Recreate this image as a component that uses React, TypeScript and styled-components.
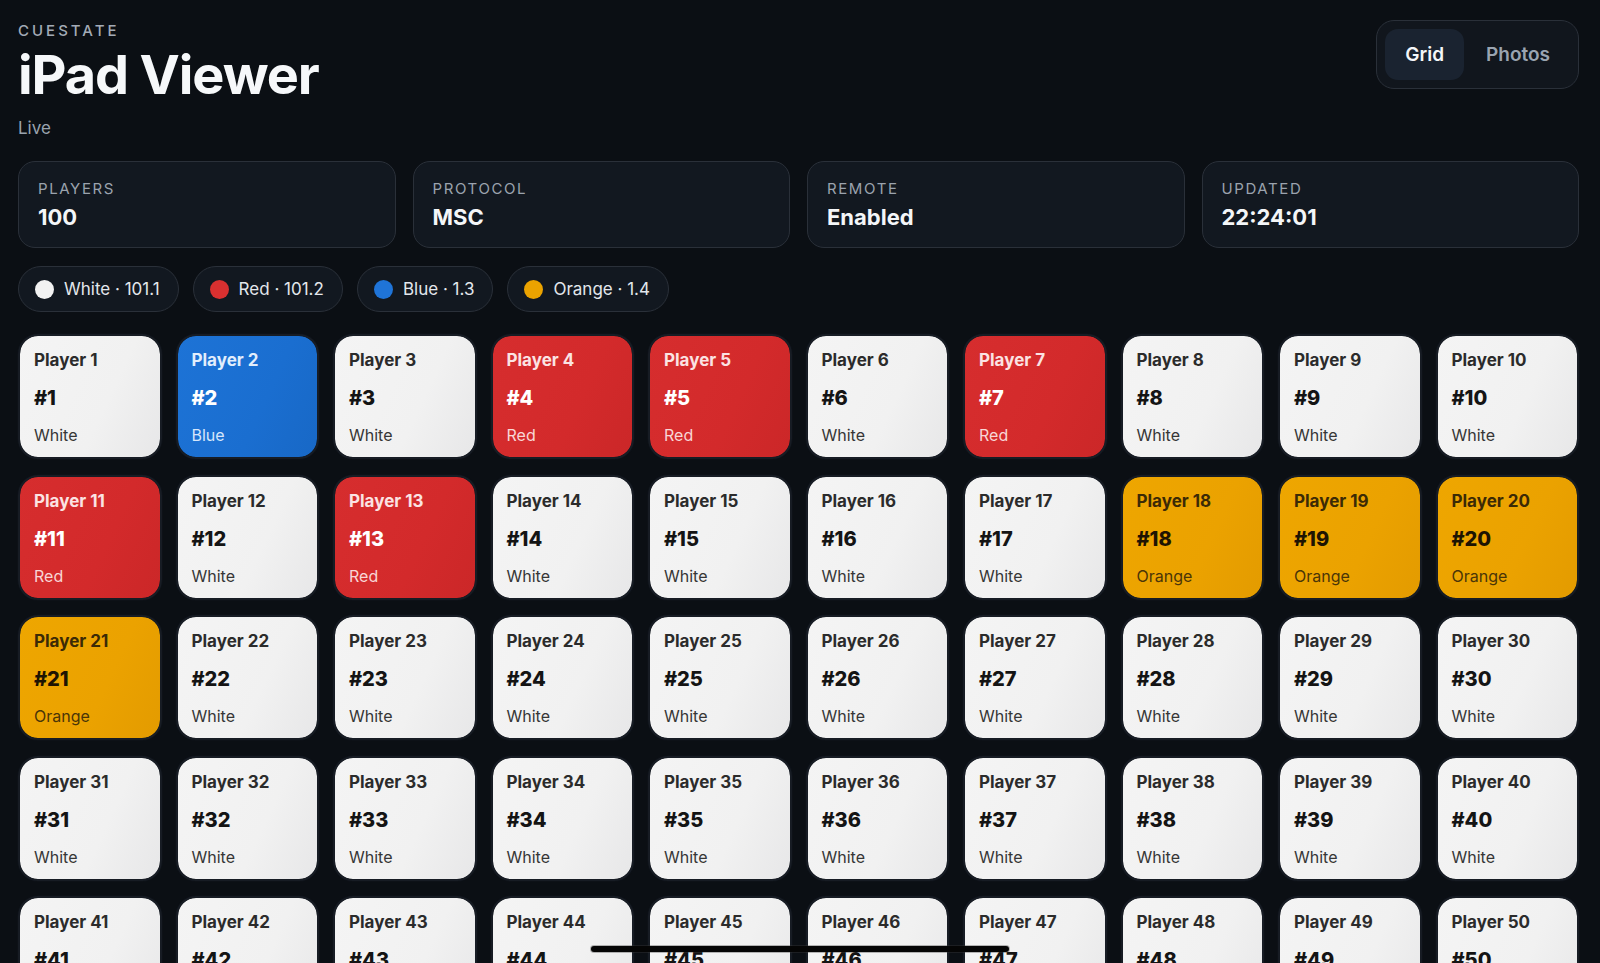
import React from "react";
import styled, { createGlobalStyle } from "styled-components";

type Cue = "White" | "Red" | "Blue" | "Orange";

const GlobalStyle = createGlobalStyle`
  html, body {
    margin: 0;
    padding: 0;
    background: #0b0f14;
  }
  body {
    font-family: Inter, "Noto Sans", "Liberation Sans", sans-serif;
    color: #f3f5f7;
    -webkit-font-smoothing: antialiased;
  }
  * { box-sizing: border-box; }
`;

const palette: Record<Cue, { bg: string; name: string; num: string; label: string; dot: string }> = {
  White: {
    bg: "linear-gradient(115deg, #f4f4f4 0%, #f1f1f1 60%, #e7e7e8 100%)",
    name: "#2b2b2b",
    num: "#141414",
    label: "#363636",
    dot: "#f2f2f2",
  },
  Red: {
    bg: "linear-gradient(115deg, #d62d2e 0%, #d32a2b 60%, #cb2728 100%)",
    name: "#fbe3e3",
    num: "#ffffff",
    label: "#f8d6d6",
    dot: "#d93030",
  },
  Blue: {
    bg: "linear-gradient(115deg, #1d73d6 0%, #1a6ed0 60%, #1868c6 100%)",
    name: "#e2eefc",
    num: "#ffffff",
    label: "#d5e6fb",
    dot: "#1f74d8",
  },
  Orange: {
    bg: "linear-gradient(115deg, #eea600 0%, #eba200 60%, #e39b00 100%)",
    name: "#3b2a06",
    num: "#1e1402",
    label: "#4a3508",
    dot: "#eba300",
  },
};

const cueFor = (n: number): Cue => {
  if (n === 2) return "Blue";
  if ([4, 5, 7, 11, 13].includes(n)) return "Red";
  if ([18, 19, 20, 21].includes(n)) return "Orange";
  return "White";
};

const Page = styled.main`
  padding: 22px 21px 40px 18px;
`;

const Header = styled.header`
  display: flex;
  justify-content: space-between;
  align-items: flex-start;
`;

const TitleBlock = styled.div`
  display: flex;
  flex-direction: column;
`;

const Eyebrow = styled.div`
  font-size: 15px;
  line-height: 18px;
  letter-spacing: 3px;
  color: #a3abb6;
  font-weight: 500;
`;

const Title = styled.h1`
  margin: 8px 0 0;
  font-size: 54px;
  line-height: 54px;
  font-weight: 700;
  letter-spacing: -1.1px;
  color: #f6f8fa;
`;

const Status = styled.div`
  margin-top: 16px;
  font-size: 17px;
  line-height: 20px;
  color: #9aa3ae;
`;

const Toggle = styled.div`
  display: flex;
  gap: 2px;
  padding: 8px;
  margin-top: -2px;
  border: 1px solid #2a3039;
  border-radius: 18px;
  background: #11161d;
`;

const ToggleButton = styled.button<{ $active?: boolean }>`
  height: 51px;
  padding: 0 20px;
  border: 0;
  border-radius: 13px;
  font-family: inherit;
  font-size: 19px;
  font-weight: 600;
  background: ${(p) => (p.$active ? "#1a2330" : "transparent")};
  color: ${(p) => (p.$active ? "#f4f6f8" : "#9aa4b0")};
`;

const Stats = styled.section`
  margin-top: 23px;
  display: grid;
  grid-template-columns: repeat(4, 1fr);
  gap: 17px;
`;

const StatCard = styled.div`
  padding: 17px 19px;
  border: 1px solid #2a3039;
  border-radius: 17px;
  background: #121820;
`;

const StatLabel = styled.div`
  font-size: 15px;
  line-height: 20px;
  letter-spacing: 1.6px;
  color: #9ba3ae;
`;

const StatValue = styled.div`
  margin-top: 5px;
  font-size: 22px;
  line-height: 26px;
  font-weight: 700;
  color: #f4f6f8;
`;

const Legend = styled.section`
  margin-top: 18px;
  display: flex;
  gap: 14px;
`;

const Pill = styled.div`
  display: flex;
  align-items: center;
  gap: 10px;
  height: 46px;
  padding: 0 18px 0 16px;
  border: 1px solid #2a3039;
  border-radius: 23px;
  background: #121820;
  font-size: 17px;
  color: #e3e7ec;
`;

const Dot = styled.span<{ $color: string }>`
  width: 19px;
  height: 19px;
  border-radius: 50%;
  background: ${(p) => p.$color};
`;

const Grid = styled.section`
  margin-top: 22px;
  display: grid;
  grid-template-columns: repeat(10, 1fr);
  column-gap: 14px;
  row-gap: 15.6px;
`;

const Tile = styled.div<{ $cue: Cue }>`
  display: flex;
  flex-direction: column;
  padding: 14px 14px 12px;
  border: 2px solid #171c24;
  border-radius: 20px;
  background: ${(p) => palette[p.$cue].bg};
  background-clip: padding-box;
  box-shadow: 0 0 0 1px #0d1117;
`;

const TileName = styled.div<{ $cue: Cue }>`
  font-size: 17px;
  line-height: 20px;
  font-weight: 700;
  color: ${(p) => palette[p.$cue].name};
  white-space: nowrap;
`;

const TileNumber = styled.div<{ $cue: Cue }>`
  margin-top: 16px;
  font-size: 20px;
  line-height: 24px;
  font-weight: 800;
  color: ${(p) => palette[p.$cue].num};
`;

const TileCue = styled.div<{ $cue: Cue }>`
  margin-top: 15px;
  font-size: 16px;
  line-height: 20px;
  color: ${(p) => palette[p.$cue].label};
`;

const HomeIndicator = styled.div`
  position: fixed;
  left: 50%;
  bottom: 11px;
  width: 418px;
  height: 6px;
  margin-left: -209px;
  border-radius: 3px;
  background: #050505;
  box-shadow: 0 0 0 1px rgba(60, 60, 60, 0.35);
`;

const stats = [
  { label: "PLAYERS", value: "100" },
  { label: "PROTOCOL", value: "MSC" },
  { label: "REMOTE", value: "Enabled" },
  { label: "UPDATED", value: "22:24:01" },
];

const legend: { cue: Cue; text: string }[] = [
  { cue: "White", text: "White · 101.1" },
  { cue: "Red", text: "Red · 101.2" },
  { cue: "Blue", text: "Blue · 1.3" },
  { cue: "Orange", text: "Orange · 1.4" },
];

const players = Array.from({ length: 100 }, (_, i) => i + 1);

export default function App() {
  return (
    <>
      <GlobalStyle />
      <Page>
        <Header>
          <TitleBlock>
            <Eyebrow>CUESTATE</Eyebrow>
            <Title>iPad Viewer</Title>
            <Status>Live</Status>
          </TitleBlock>
          <Toggle>
            <ToggleButton $active>Grid</ToggleButton>
            <ToggleButton>Photos</ToggleButton>
          </Toggle>
        </Header>

        <Stats>
          {stats.map((s) => (
            <StatCard key={s.label}>
              <StatLabel>{s.label}</StatLabel>
              <StatValue>{s.value}</StatValue>
            </StatCard>
          ))}
        </Stats>

        <Legend>
          {legend.map((l) => (
            <Pill key={l.cue}>
              <Dot $color={palette[l.cue].dot} />
              {l.text}
            </Pill>
          ))}
        </Legend>

        <Grid>
          {players.map((n) => {
            const cue = cueFor(n);
            return (
              <Tile key={n} $cue={cue}>
                <TileName $cue={cue}>Player {n}</TileName>
                <TileNumber $cue={cue}>#{n}</TileNumber>
                <TileCue $cue={cue}>{cue}</TileCue>
              </Tile>
            );
          })}
        </Grid>
      </Page>
      <HomeIndicator />
    </>
  );
}
